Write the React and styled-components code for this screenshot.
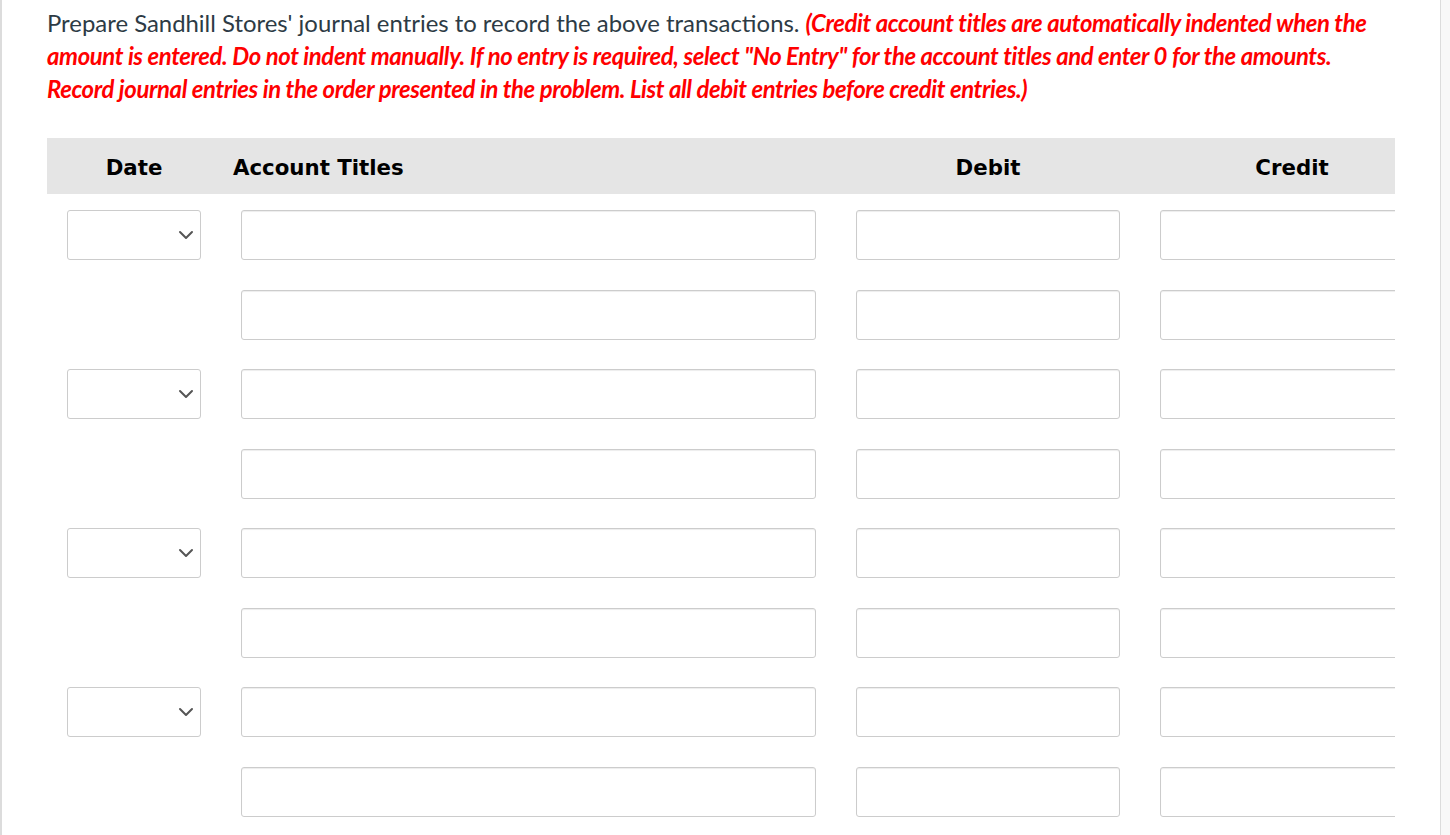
import React from 'react'
import styled, { createGlobalStyle } from 'styled-components';
import { ChevronDown } from 'lucide-react';

const GlobalStyle = createGlobalStyle`
  html, body {
    margin: 0;
    padding: 0;
    background: #f8f8f8;
  }
  * { box-sizing: border-box; }
`;

const rows = [true, false, true, false, true, false, true, false];

const App = () => {
  return (
    <>
      <GlobalStyle />
      <Panel>
        <Intro>
          Prepare Sandhill Stores' journal entries to record the above transactions.{' '}
          <Note>
            (Credit account titles are automatically indented when the amount is entered. Do not indent manually. If no entry is required, select "No Entry" for the account titles and enter 0 for the amounts. Record journal entries in the order presented in the problem. List all debit entries before credit entries.)
          </Note>
        </Intro>

        <Table>
          <HeadRow>
            <HeadCell $align="center">Date</HeadCell>
            <HeadCell $align="left">Account Titles</HeadCell>
            <HeadCell $align="center">Debit</HeadCell>
            <HeadCell $align="center">Credit</HeadCell>
          </HeadRow>
          <Body>
            {rows.map((hasDate, idx) => (
              <Row key={idx}>
                <Cell>
                  {hasDate ? (
                    <Select>
                      <ChevronDown size={24} strokeWidth={2} color="#555" />
                    </Select>
                  ) : null}
                </Cell>
                <Cell><Field type="text" /></Cell>
                <Cell><Field type="text" /></Cell>
                <Cell><Field type="text" /></Cell>
              </Row>
            ))}
          </Body>
        </Table>
      </Panel>
    </>
  )
}

const Panel = styled.div`
  width: 1441px;
  min-height: 835px;
  background: #fff;
  border-left: 2px solid #dcdcdc;
  border-right: 1px solid #dcdcdc;
  padding: 6px 0 0 45px;
`;

const Intro = styled.p`
  margin: 0 0 33px 0;
  width: 1350px;
  font-family: Lato, "Open Sans", sans-serif;
  font-size: 23.9px;
  line-height: 33px;
  color: #2d3b45;
`;

const Note = styled.em`
  color: #ff0000;
  font-weight: 700;
  font-style: italic;
  letter-spacing: -0.38px;
`;

const Table = styled.div`
  width: 1348px;
  overflow: hidden;
`;

const columns = `174px 615px 304px 304px`;

const HeadRow = styled.div`
  display: grid;
  grid-template-columns: ${columns};
  height: 56px;
  padding-top: 2px;
  background: #e5e5e5;
  align-items: center;
`;

const HeadCell = styled.div`
  font-family: "DejaVu Sans", Verdana, sans-serif;
  font-weight: 700;
  font-size: 21.3px;
  color: #000;
  text-align: ${({ $align }) => $align};
  padding-left: ${({ $align }) => ($align === 'left' ? '12px' : '0')};
`;

const Body = styled.div`
  padding-top: 16px;
  display: flex;
  flex-direction: column;
  gap: 29.5px;
`;

const Row = styled.div`
  display: grid;
  grid-template-columns: ${columns};
  height: 50px;
`;

const Cell = styled.div`
  padding: 0 20px;
`;

const Field = styled.input`
  display: block;
  width: 100%;
  height: 50px;
  border: 1px solid #cccccc;
  border-radius: 3px;
  box-shadow: inset 0 1px 1px rgba(0, 0, 0, 0.075);
  background: #fff;
  outline: none;
`;

const Select = styled.div`
  display: flex;
  align-items: center;
  justify-content: flex-end;
  height: 50px;
  padding-right: 2px;
  border: 1px solid #cccccc;
  border-radius: 3px;
  background: #fff;
`;

export default App
